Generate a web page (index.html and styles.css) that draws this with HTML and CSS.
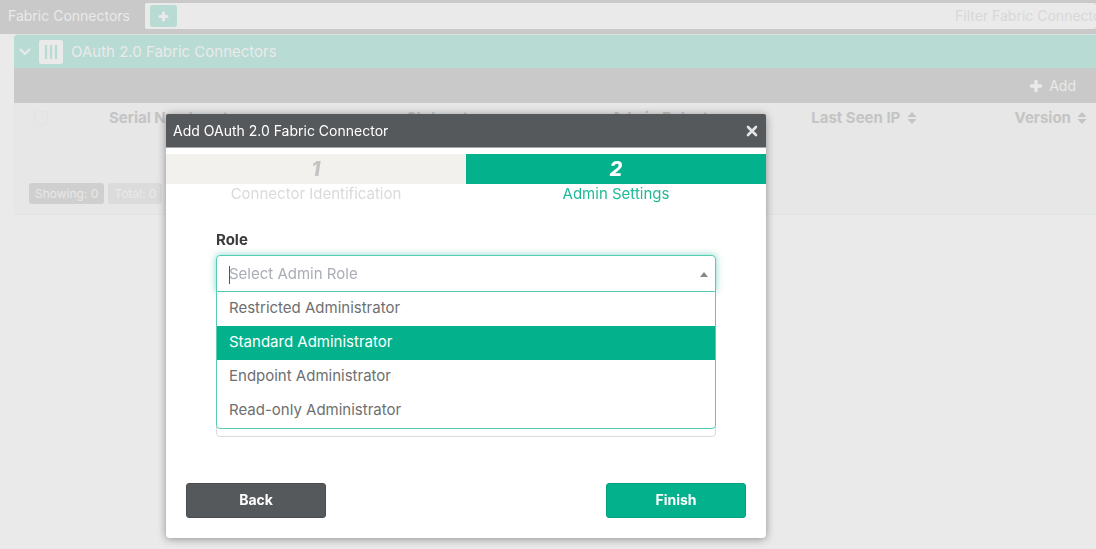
FILE: index.html
```html
<!DOCTYPE html>
<html lang="en">
<head>
<meta charset="utf-8">
<title>Fabric Connectors</title>
<link rel="stylesheet" href="styles.css">
</head>
<body>
<header class="topbar">
  <h1 class="topbar-title">Fabric Connectors</h1>
  <div class="searchbar">
    <button class="add-filter" type="button" aria-label="Add filter">
      <svg width="11" height="11" viewBox="0 0 11 11"><path d="M5.500 2v7M2 5.500h7" stroke="currentColor" stroke-width="3" stroke-linecap="round"/></svg>
    </button>
    <input class="filter" type="text" aria-label="Filter" placeholder="Filter Fabric Connectors">
  </div>
</header>

<main class="panel">
  <div class="panel-head">
    <button class="collapse" type="button" aria-label="Collapse">
      <svg width="12" height="8" viewBox="0 0 12 8"><path d="M1.500 1.500L6 6l4.500-4.500" fill="none" stroke="currentColor" stroke-width="2" stroke-linecap="round" stroke-linejoin="round"/></svg>
    </button>
    <svg class="panel-icon" width="24" height="24" viewBox="0 0 24 24"><rect width="24" height="24" rx="2" fill="#eaeaea"/><path d="M7 6v12M12 6v12M17 6v12" stroke="#b8dbd4" stroke-width="2.400" stroke-linecap="round"/></svg>
    <h2 class="panel-title">OAuth 2.0 Fabric Connectors</h2>
  </div>
  <div class="toolbar">
    <button class="add" type="button">
      <svg width="12" height="12" viewBox="0 0 12 12"><path d="M6 1.500v9M1.500 6h9" stroke="currentColor" stroke-width="3.400" stroke-linecap="round"/></svg>
      Add
    </button>
  </div>
  <table class="grid">
    <thead>
      <tr>
        <th class="col-check"><input class="check" type="checkbox" aria-label="Select all"></th>
        <th class="col-serial">Serial Number <svg class="sort" width="10" height="12" viewBox="0 0 10 12"><path d="M5 0l4.500 5h-9zM5 12L.5 7h9z" fill="currentColor"/></svg></th>
        <th class="col-status">Status <svg class="sort" width="10" height="12" viewBox="0 0 10 12"><path d="M5 0l4.500 5h-9zM5 12L.5 7h9z" fill="currentColor"/></svg></th>
        <th class="col-role">Admin Role <svg class="sort" width="10" height="12" viewBox="0 0 10 12"><path d="M5 0l4.500 5h-9zM5 12L.5 7h9z" fill="currentColor"/></svg></th>
        <th class="col-ip">Last Seen IP <svg class="sort" width="10" height="12" viewBox="0 0 10 12"><path d="M5 0l4.500 5h-9zM5 12L.5 7h9z" fill="currentColor"/></svg></th>
        <th class="col-version">Version <svg class="sort" width="10" height="12" viewBox="0 0 10 12"><path d="M5 0l4.500 5h-9zM5 12L.5 7h9z" fill="currentColor"/></svg></th>
      </tr>
    </thead>
  </table>
  <div class="counts">
    <span class="badge">Showing: 0</span>
    <span class="badge badge-light">Total: 0</span>
  </div>
</main>

<div class="overlay">
  <form class="modal" role="dialog" aria-labelledby="dialog-title">
    <div class="modal-head">
      <h2 class="modal-title" id="dialog-title">Add OAuth 2.0 Fabric Connector</h2>
      <button class="close" type="button" aria-label="Close">
        <svg width="12" height="12" viewBox="0 0 12 12"><path d="M2 2l8 8M10 2l-8 8" stroke="currentColor" stroke-width="2.600" stroke-linecap="round"/></svg>
      </button>
    </div>
    <ol class="steps">
      <li class="step"><span class="step-number">1</span><span class="step-label">Connector Identification</span></li>
      <li class="step step-active"><span class="step-number">2</span><span class="step-label">Admin Settings</span></li>
    </ol>
    <div class="fields">
      <label class="label" for="role">Role</label>
      <div class="combo">
        <input class="combo-input" id="role" type="text" role="combobox" aria-expanded="true" aria-controls="roles" placeholder="Select Admin Role">
        <span class="caret"></span>
        <svg class="arrow" width="8" height="5" viewBox="0 0 8 5"><path d="M4 0l4 5H0z" fill="#888"/></svg>
        <ul class="menu" id="roles" role="listbox">
          <li class="option" role="option">Restricted Administrator</li>
          <li class="option option-active" role="option" aria-selected="true">Standard Administrator</li>
          <li class="option" role="option">Endpoint Administrator</li>
          <li class="option" role="option">Read-only Administrator</li>
        </ul>
      </div>
      <input class="field" type="text" aria-label="Admin setting">
    </div>
    <div class="actions">
      <button class="btn btn-dark" type="button">Back</button>
      <button class="btn btn-primary" type="submit">Finish</button>
    </div>
  </form>
</div>
</body>
</html>
```

FILE: styles.css
```css
* { box-sizing: border-box; }

body {
  margin: 0;
  min-height: 100vh;
  overflow: hidden;
  background: #eaeaea;
  color: #5f6062;
  font: 15px/20px Inter, "Liberation Sans", sans-serif;
}

h1, h2, ol, ul { margin: 0; padding: 0; list-style: none; font-size: inherit; font-weight: 400; }
button, input { margin: 0; padding: 0; border: 0; background: none; color: inherit; font: inherit; }
input:focus { outline: none; }
svg { display: block; flex: none; }

.topbar {
  display: flex;
  align-items: center;
  gap: 15px;
  height: 34px;
  padding: 0 0 2px 8px;
  background: #c8c9c8;
  color: #eaeaea;
}
.topbar-title { font-size: 14px; white-space: nowrap; }
.searchbar {
  display: flex;
  flex: 1;
  align-items: center;
  justify-content: space-between;
  height: 26px;
  padding-left: 5px;
  border-radius: 2px;
  background: #eaeaea;
}
.add-filter {
  display: grid;
  place-items: center;
  width: 27px;
  height: 22px;
  border-radius: 3px;
  background: #b8dbd4;
}
.filter { width: 141px; font-size: 14px; }
.filter::placeholder { color: #d7d8d8; opacity: 1; }

.panel {
  margin-left: 14px;
  border-top: 1px solid #d5e2df;
  border-bottom: 1px solid #e2e3e3;
  border-radius: 4px 0 0 4px;
  background: #e7e7e7;
  overflow: hidden;
}
.panel-head {
  display: flex;
  align-items: center;
  height: 33px;
  padding-left: 5px;
  background: #b8dbd4;
  color: #eaeaea;
}
.panel-icon { margin: 0 8px; }
.panel-title { font-size: 15px; }
.toolbar {
  display: flex;
  align-items: center;
  justify-content: flex-end;
  height: 35px;
  padding-right: 20px;
  background: #c8c9c8;
  color: #eaeaea;
}
.add { display: flex; align-items: center; gap: 7px; font-size: 14px; }

.grid { width: 100%; table-layout: fixed; border-collapse: collapse; color: #c4c4c4; }
.grid th { padding: 5px 0; text-align: left; font-weight: 700; white-space: nowrap; }
.grid .col-check { width: 95px; padding-left: 20px; }
.col-serial { width: 27.5%; }
.col-status { width: 18.9%; }
.col-role { width: 18.5%; }
.col-ip { width: 18.8%; }
.check {
  display: block;
  width: 14px;
  height: 14px;
  appearance: none;
  border: 1px solid #e3e3e3;
  border-radius: 3px;
}
.sort { display: inline-block; margin-left: 3px; vertical-align: -1px; }

.counts { display: flex; gap: 4px; padding: 50px 15px 10px; }
.badge {
  padding: 0 6px;
  border-radius: 3px;
  background: #cfcfcf;
  color: #e9e9e9;
  font-size: 12px;
  line-height: 21px;
}
.badge-light { background: #dbdbdb; }

.overlay { position: fixed; inset: 0; padding: 114px 15% 0 166px; }
.modal {
  max-width: 600px;
  border-radius: 4px;
  background: #fff;
  box-shadow: 0 1px 8px rgba(0, 0, 0, .4);
}
.modal-head {
  display: flex;
  align-items: center;
  justify-content: space-between;
  height: 34px;
  padding: 0 8px 0 7px;
  border-bottom: 1px solid #a4a6a7;
  border-radius: 2px 2px 0 0;
  background: #56595b;
  color: #fff;
}
.modal-title { font-size: 14px; }
.close { color: #e4e5e5; }

.steps { display: flex; padding-top: 6px; }
.step { flex: 1; color: #dadada; text-align: center; }
.step-number {
  display: block;
  background: #f2f1ed;
  color: #c4c4c4;
  font-size: 20px;
  font-style: italic;
  font-weight: 800;
  line-height: 30px;
}
.step-label { display: block; }
.step-active { color: #1fba98; }
.step-active .step-number { background: #03b28d; color: #fff; }

.fields { padding: 26px 50px 0; }
.label { display: block; margin-bottom: 5px; color: #3c3c3c; font-weight: 700; }
.combo { position: relative; }
.combo-input {
  display: block;
  width: 100%;
  height: 37px;
  padding: 0 12px;
  border: 1px solid #56ccb2;
  border-radius: 4px 4px 0 0;
  background: #fff;
  box-shadow: 0 0 7px rgba(3, 178, 141, .5);
}
.combo-input::placeholder { color: #a9adb5; opacity: 1; }
.caret { position: absolute; top: 11px; left: 13px; width: 1px; height: 18px; background: #555; }
.arrow { position: absolute; top: 17px; right: 8px; }
.menu {
  position: absolute;
  top: 36px;
  right: 0;
  left: 0;
  border: 1px solid #56ccb2;
  border-radius: 0 0 4px 4px;
  background: #fff;
}
.option { padding: 6px 12px 8px; color: #6e6f70; }
.option-active { background: #03b28d; color: #fff; }
.field {
  display: block;
  width: 100%;
  height: 37px;
  margin-top: 108px;
  padding: 0 12px;
  border: 1px solid #dcdcdc;
  border-radius: 4px;
}

.actions { display: flex; justify-content: space-between; padding: 46px 20px 20px; }
.btn {
  width: 140px;
  height: 35px;
  padding-bottom: 2px;
  border: 1px solid;
  border-radius: 3px;
  color: #fff;
  font-size: 14px;
  font-weight: 700;
}
.btn-dark { border-color: #4b4e50; background: #56595b; }
.btn-primary { border-color: #05a17f; background: #03b28d; }
```
